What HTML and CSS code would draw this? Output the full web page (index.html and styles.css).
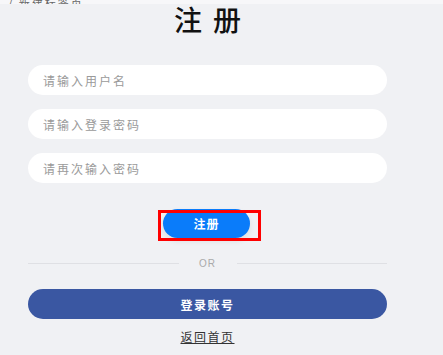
FILE: index.html
```html
<!DOCTYPE html>
<html lang="zh-CN">
<head>
    <meta charset="UTF-8">
    <meta name="viewport" content="width=device-width, initial-scale=1.0">
    <title>注册</title>
    <link rel="stylesheet" href="styles.css">
</head>
<body>
    <div class="topbar">
        <span class="topbar-text">/ 新建标签页</span>
    </div>

    <div class="container">
        <h1 class="title">注册</h1>

        <form class="register-form" id="registerForm">
            <input type="text" name="username" placeholder="请输入用户名">
            <input type="password" name="password" placeholder="请输入登录密码">
            <input type="password" name="confirm" placeholder="请再次输入密码">

            <div class="submit-row">
                <div class="submit-wrap">
                    <button type="submit" class="register-btn">注册</button>
                    <span class="highlight"></span>
                </div>
            </div>
        </form>

        <div class="divider">
            <span class="line"></span>
            <span class="or">OR</span>
            <span class="line"></span>
        </div>

        <button class="login-btn">登录账号</button>

        <div class="back">
            <a href="#">返回首页</a>
        </div>
    </div>
</body>
</html>
```

FILE: styles.css
```css
body {
    font-family: "Noto Sans CJK SC", "Noto Sans", sans-serif;
    background-color: #f0f1f4;
    margin: 0;
    padding: 0;
}
.topbar {
    height: 4px;
    background-color: #f7f7f9;
    overflow: hidden;
    display: flex;
    align-items: flex-end;
    padding-left: 8px;
}
.topbar-text {
    font-size: 11px;
    line-height: 6px;
    color: #666;
    letter-spacing: 2px;
    margin-bottom: -2px;
}
.container {
    width: 359px;
    margin-left: 28px;
}
.title {
    margin: 0;
    text-align: center;
    font-family: "Noto Sans CJK SC", serif;
    font-size: 28px;
    font-weight: 500;
    letter-spacing: 11px;
    text-indent: 11px;
    line-height: 30px;
    color: #111;
}
.register-form {
    display: flex;
    flex-direction: column;
    gap: 14px;
    margin-top: 31px;
}
.register-form input {
    height: 30px;
    box-sizing: border-box;
    border: none;
    border-radius: 15px;
    background: #fff;
    padding: 0 15px;
    font-family: inherit;
    font-size: 12px;
    letter-spacing: 2px;
    outline: none;
}
.register-form input::placeholder {
    color: #9a9a9a;
}
.submit-row {
    display: flex;
    justify-content: center;
    margin-top: 12px;
    margin-left: -2px;
}
.submit-wrap {
    position: relative;
    padding: 0 8px;
}
.register-btn {
    width: 87px;
    height: 29px;
    border: none;
    border-radius: 15px;
    background-color: #0a7cfa;
    color: white;
    font-family: inherit;
    font-size: 12px;
    font-weight: 700;
    letter-spacing: 1px;
    cursor: pointer;
    box-shadow: 0 3px 6px rgba(0, 0, 0, 0.08);
}
.highlight {
    position: absolute;
    left: 3px;
    right: -3px;
    top: 1px;
    bottom: -3px;
    border: 3px solid #f00;
    pointer-events: none;
}
.divider {
    display: flex;
    align-items: center;
    margin-top: 20px;
}
.line {
    flex: 1;
    height: 1px;
    background: #dfe0e4;
}
.or {
    width: 58px;
    text-align: center;
    font-family: "Liberation Sans", sans-serif;
    font-size: 10px;
    color: #aaa;
    letter-spacing: 1px;
}
.login-btn {
    display: block;
    width: 100%;
    height: 30px;
    margin-top: 20px;
    border: none;
    border-radius: 15px;
    background-color: #3a57a2;
    color: white;
    font-family: inherit;
    font-size: 12px;
    font-weight: 700;
    letter-spacing: 1.5px;
    cursor: pointer;
}
.back {
    text-align: center;
    margin-top: 4px;
}
.back a {
    color: #333;
    font-size: 12px;
    letter-spacing: 1.5px;
}
```
